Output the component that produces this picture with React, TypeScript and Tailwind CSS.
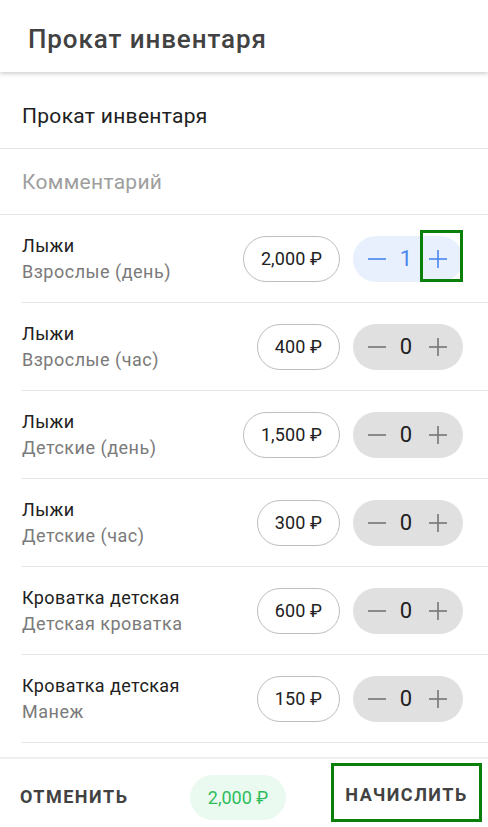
import React from "react";

type Item = { title: string; sub: string; price: string; qty: number };

const items: Item[] = [
  { title: "Лыжи", sub: "Взрослые (день)", price: "2,000 ₽", qty: 1 },
  { title: "Лыжи", sub: "Взрослые (час)", price: "400 ₽", qty: 0 },
  { title: "Лыжи", sub: "Детские (день)", price: "1,500 ₽", qty: 0 },
  { title: "Лыжи", sub: "Детские (час)", price: "300 ₽", qty: 0 },
  { title: "Кроватка детская", sub: "Детская кроватка", price: "600 ₽", qty: 0 },
  { title: "Кроватка детская", sub: "Манеж", price: "150 ₽", qty: 0 },
];

function Minus({ color }: { color: string }) {
  return (
    <svg width="20" height="20" viewBox="0 0 20 20">
      <line x1="1" y1="10" x2="19" y2="10" stroke={color} strokeWidth="1.6" />
    </svg>
  );
}

function Plus({ color }: { color: string }) {
  return (
    <svg width="20" height="20" viewBox="0 0 20 20">
      <line x1="1" y1="10" x2="19" y2="10" stroke={color} strokeWidth="1.6" />
      <line x1="10" y1="1" x2="10" y2="19" stroke={color} strokeWidth="1.6" />
    </svg>
  );
}

function Row({ item, first }: { item: Item; first: boolean }) {
  const active = item.qty > 0;
  const iconColor = active ? "#4a86f0" : "#757575";
  return (
    <div className="ml-[22px] h-[88px] border-b border-[#e4e4e4] flex items-center pr-[25px]">
      <div className="flex-1 flex flex-col">
        <div className="text-[18px] leading-[24px] tracking-[0.4px] text-[#212121]">{item.title}</div>
        <div className="text-[18px] leading-[24px] tracking-[0.5px] text-[#7a7a7a] mt-[2px]">{item.sub}</div>
      </div>
      <div className="h-[46px] px-[17px] rounded-full border border-[#bdbdbd] flex items-center text-[18px] tracking-[0.1px] text-[#212121]">
        {item.price}
      </div>
      <div
        className={
          "ml-[13px] w-[110px] h-[46px] rounded-full flex items-center relative " +
          (active ? "bg-[#e8f0fe]" : "bg-[#e0e0e0]")
        }
      >
        <div className="absolute left-[14px] top-[13px]">
          <Minus color={iconColor} />
        </div>
        <div
          className={
            "absolute left-[44px] w-[18px] text-center top-[9px] text-[22px] leading-[28px] " +
            (active ? "text-[#4a86f0]" : "text-[#212121]")
          }
        >
          {item.qty}
        </div>
        <div className="absolute left-[75px] top-[13px]">
          <Plus color={iconColor} />
        </div>
        {first && (
          <div className="absolute left-[67px] top-[-6px] w-[43px] h-[52px] border-[3px] border-[#0a800a]" />
        )}
      </div>
    </div>
  );
}

export default function App() {
  return (
    <div
      className="w-[488px] h-[827px] bg-white flex flex-col overflow-hidden"
      style={{ fontFamily: "Roboto, 'Noto Sans', sans-serif" }}
    >
      <div className="h-[72px] flex items-center pl-[28px] pt-[6px] shadow-[0_2px_4px_rgba(0,0,0,0.18)] relative z-10">
        <div className="text-[26px] font-medium text-[#424242] tracking-[0.9px]">Прокат инвентаря</div>
      </div>
      <div className="flex-1 flex flex-col">
        <div className="h-[77px] border-b border-[#e4e4e4] flex items-center pl-[22px] pt-[13px]">
          <div className="text-[21px] tracking-[0.3px] text-[#212121]">Прокат инвентаря</div>
        </div>
        <div className="h-[66px] border-b border-[#e4e4e4] flex items-center pl-[22px] pt-[3px]">
          <div className="text-[21px] tracking-[0.3px] text-[#9e9e9e]">Комментарий</div>
        </div>
        {items.map((it, i) => (
          <Row key={i} item={it} first={i === 0} />
        ))}
      </div>
      <div className="h-[70px] border-t-[2px] border-[#efefef] flex items-start">
        <div className="ml-[20px] w-[170px] mt-[26px] text-[18px] leading-[24px] font-bold tracking-[1.5px] text-[#424242]">
          ОТМЕНИТЬ
        </div>
        <div className="mt-[16px] h-[45px] w-[96px] rounded-full bg-[#ebfaf0] flex items-center justify-center text-[18px] text-[#2ebd5c]">
          2,000 ₽
        </div>
        <div className="mt-[4px] ml-[45px] w-[151px] h-[59px] border-[3px] border-[#0a800a] flex items-center justify-center pt-[4px]">
          <span className="text-[18px] leading-[24px] font-bold tracking-[1.5px] text-[#424242]">НАЧИСЛИТЬ</span>
        </div>
      </div>
    </div>
  );
}
